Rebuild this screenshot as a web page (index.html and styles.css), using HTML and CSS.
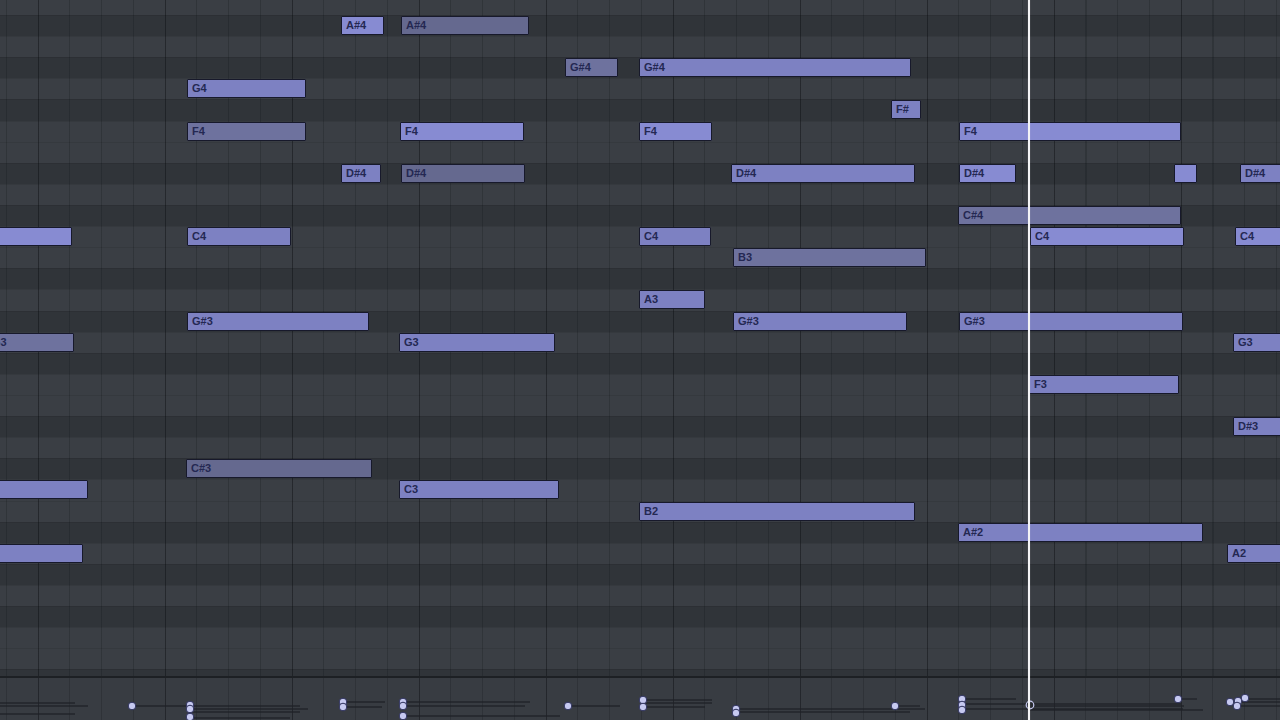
FILE: index.html
```html
<!DOCTYPE html>
<html>
<head>
<meta charset="utf-8">
<title>Piano Roll</title>
<link rel="stylesheet" href="styles.css">
</head>
<body>
<div class="roll">
  <div class="rows">
    <div class="track">
      <div class="row white"></div><!-- B4 -->
      <div class="row black"><!-- A#4 -->
        <div class="note v1" style="left:341px;width:43px">A#4</div>
        <div class="note v4" style="left:401px;width:128px">A#4</div>
      </div>
      <div class="row white"></div><!-- A4 -->
      <div class="row black"><!-- G#4 -->
        <div class="note v3" style="left:565px;width:53px">G#4</div>
        <div class="note v2" style="left:639px;width:272px">G#4</div>
      </div>
      <div class="row white"><!-- G4 -->
        <div class="note v2" style="left:187px;width:119px">G4</div>
      </div>
      <div class="row black"><!-- F#4 -->
        <div class="note v2" style="left:891px;width:30px">F#</div>
      </div>
      <div class="row white"><!-- F4 -->
        <div class="note v3" style="left:187px;width:119px">F4</div>
        <div class="note v1" style="left:400px;width:124px">F4</div>
        <div class="note v1" style="left:639px;width:73px">F4</div>
        <div class="note v1" style="left:959px;width:222px">F4</div>
      </div>
      <div class="row white"></div><!-- E4 -->
      <div class="row black"><!-- D#4 -->
        <div class="note v2" style="left:341px;width:40px">D#4</div>
        <div class="note v4" style="left:401px;width:124px">D#4</div>
        <div class="note v2" style="left:731px;width:184px">D#4</div>
        <div class="note v1" style="left:959px;width:57px">D#4</div>
        <div class="note v1" style="left:1174px;width:23px"></div>
        <div class="note v2" style="left:1240px;width:60px">D#4</div>
      </div>
      <div class="row white"></div><!-- D4 -->
      <div class="row black"><!-- C#4 -->
        <div class="note v3" style="left:958px;width:223px">C#4</div>
      </div>
      <div class="row white"><!-- C4 -->
        <div class="note v1" style="left:-10px;width:82px"></div>
        <div class="note v2" style="left:187px;width:104px">C4</div>
        <div class="note v2" style="left:639px;width:72px">C4</div>
        <div class="note v1" style="left:1030px;width:154px">C4</div>
        <div class="note v1" style="left:1235px;width:60px">C4</div>
      </div>
      <div class="row white"><!-- B3 -->
        <div class="note v3" style="left:733px;width:193px">B3</div>
      </div>
      <div class="row black"></div><!-- A#3 -->
      <div class="row white"><!-- A3 -->
        <div class="note v2" style="left:639px;width:66px">A3</div>
      </div>
      <div class="row black"><!-- G#3 -->
        <div class="note v2" style="left:187px;width:182px">G#3</div>
        <div class="note v2" style="left:733px;width:174px">G#3</div>
        <div class="note v2" style="left:959px;width:224px">G#3</div>
      </div>
      <div class="row white"><!-- G3 -->
        <div class="note v3" style="left:-13px;width:87px">G3</div>
        <div class="note v2" style="left:399px;width:156px">G3</div>
        <div class="note v2" style="left:1233px;width:60px">G3</div>
      </div>
      <div class="row black"></div><!-- F#3 -->
      <div class="row white"><!-- F3 -->
        <div class="note v2" style="left:1029px;width:150px">F3</div>
      </div>
      <div class="row white"></div><!-- E3 -->
      <div class="row black"><!-- D#3 -->
        <div class="note v2" style="left:1233px;width:60px">D#3</div>
      </div>
      <div class="row white"></div><!-- D3 -->
      <div class="row black"><!-- C#3 -->
        <div class="note v4" style="left:186px;width:186px">C#3</div>
      </div>
      <div class="row white"><!-- C3 -->
        <div class="note v2" style="left:-10px;width:98px"></div>
        <div class="note v2" style="left:399px;width:160px">C3</div>
      </div>
      <div class="row white"><!-- B2 -->
        <div class="note v2" style="left:639px;width:276px">B2</div>
      </div>
      <div class="row black"><!-- A#2 -->
        <div class="note v2" style="left:958px;width:245px">A#2</div>
      </div>
      <div class="row white"><!-- A2 -->
        <div class="note v2" style="left:-10px;width:93px"></div>
        <div class="note v2" style="left:1227px;width:70px">A2</div>
      </div>
      <div class="row black"></div><!-- G#2 -->
      <div class="row white"></div><!-- G2 -->
      <div class="row black"></div><!-- F#2 -->
      <div class="row white"></div><!-- F2 -->
      <div class="row white"></div><!-- E2 -->
      <div class="row black"></div><!-- D#2 -->
      <div class="row white"></div><!-- D2 -->
    </div>
  </div>
  <div class="velocity">
    <svg class="vel-svg" width="1280" height="42" viewBox="0 678 1280 42">
      <g class="stems">
        <line x1="0" y1="703" x2="75" y2="703"/>
        <line x1="0" y1="706" x2="88" y2="706"/>
        <line x1="0" y1="714" x2="75" y2="714"/>
        <line x1="132" y1="706" x2="300" y2="706"/>
        <line x1="190" y1="709" x2="308" y2="709"/>
        <line x1="190" y1="712" x2="300" y2="712"/>
        <line x1="190" y1="718" x2="290" y2="718"/>
        <line x1="343" y1="702" x2="385" y2="702"/>
        <line x1="343" y1="707" x2="382" y2="707"/>
        <line x1="403" y1="702" x2="530" y2="702"/>
        <line x1="403" y1="706" x2="525" y2="706"/>
        <line x1="403" y1="716" x2="560" y2="716"/>
        <line x1="568" y1="706" x2="620" y2="706"/>
        <line x1="643" y1="700" x2="712" y2="700"/>
        <line x1="643" y1="703" x2="712" y2="703"/>
        <line x1="643" y1="707" x2="705" y2="707"/>
        <line x1="736" y1="709" x2="925" y2="709"/>
        <line x1="736" y1="712" x2="910" y2="712"/>
        <line x1="895" y1="706" x2="920" y2="706"/>
        <line x1="962" y1="699" x2="1016" y2="699"/>
        <line x1="962" y1="704" x2="1181" y2="704"/>
        <line x1="962" y1="709" x2="1183" y2="709"/>
        <line x1="1030" y1="706" x2="1184" y2="706"/>
        <line x1="1030" y1="710" x2="1203" y2="710"/>
        <line x1="1178" y1="699" x2="1197" y2="699"/>
        <line x1="1238" y1="699" x2="1280" y2="699"/>
        <line x1="1238" y1="702" x2="1280" y2="702"/>
        <line x1="1238" y1="706" x2="1280" y2="706"/>
      </g>
      <g class="dots">
        <circle cx="132" cy="706" r="3.8"/>
        <circle cx="190" cy="705" r="3.8"/>
        <circle cx="190" cy="709" r="3.8"/>
        <circle cx="190" cy="717" r="3.8"/>
        <circle cx="343" cy="702" r="3.8"/>
        <circle cx="343" cy="707" r="3.8"/>
        <circle cx="403" cy="702" r="3.8"/>
        <circle cx="403" cy="706" r="3.8"/>
        <circle cx="403" cy="716" r="3.8"/>
        <circle cx="568" cy="706" r="3.8"/>
        <circle cx="643" cy="700" r="3.8"/>
        <circle cx="643" cy="707" r="3.8"/>
        <circle cx="736" cy="709" r="3.8"/>
        <circle cx="736" cy="713" r="3.8"/>
        <circle cx="895" cy="706" r="3.8"/>
        <circle cx="962" cy="699" r="3.8"/>
        <circle cx="962" cy="705" r="3.8"/>
        <circle cx="962" cy="710" r="3.8"/>
        <circle cx="1178" cy="699" r="3.8"/>
        <circle cx="1230" cy="702" r="3.8"/>
        <circle cx="1238" cy="701" r="3.8"/>
        <circle cx="1245" cy="698" r="3.8"/>
        <circle cx="1237" cy="706" r="3.8"/>
      </g>
      <circle class="ring" cx="1030" cy="705" r="3.8"/>
    </svg>
  </div>
  <div class="playhead"></div>
</div>
</body>
</html>
```

FILE: styles.css
```css
html, body {
  margin: 0;
  padding: 0;
  background: #383c42;
  overflow: hidden;
}

.roll {
  position: relative;
  width: 1280px;
  height: 720px;
  overflow: hidden;
  display: flex;
  flex-direction: column;
  font-family: "Liberation Sans", Arial, sans-serif;
  --beat: rgba(10, 12, 16, 0.2);
  --bar: rgba(10, 12, 16, 0.3);
}

.rows {
  flex: none;
  height: 676px;
  overflow: hidden;
}

.track {
  display: flex;
  flex-direction: column;
  margin-top: -6.12px;
}

.row {
  position: relative;
  flex: none;
  height: 21.12px;
  box-sizing: border-box;
  border-top: 1px solid rgba(0, 0, 0, 0.08);
  background-image:
    repeating-linear-gradient(90deg, var(--bar) 38px 39px, transparent 39px 165px),
    repeating-linear-gradient(90deg, var(--beat) 6px 7px, transparent 7px 37.75px);
}

.row.white {
  background-color: #3a3e44;
}

.row.black {
  background-color: #303439;
}

.note {
  position: absolute;
  top: 0;
  height: 19px;
  box-sizing: border-box;
  border: 1.5px solid #17192b;
  border-radius: 1px;
  padding-left: 4px;
  font-size: 11px;
  font-weight: bold;
  line-height: 16px;
  color: #242852;
  white-space: nowrap;
  overflow: hidden;
  z-index: 1;
}

.note.v1 { background: #878bd2; }
.note.v2 { background: #7d81c2; }
.note.v3 { background: #6e729e; }
.note.v4 { background: #65698f; }

.velocity {
  flex: 1;
  border-top: 2px solid #1d2024;
  background-color: #383c42;
  background-image:
    repeating-linear-gradient(90deg, var(--bar) 38px 39px, transparent 39px 165px),
    repeating-linear-gradient(90deg, var(--beat) 6px 7px, transparent 7px 37.75px);
}

.vel-svg {
  display: block;
}

.stems line {
  stroke: #1f2227;
  stroke-width: 1.4;
  opacity: 0.85;
}

.dots circle {
  fill: #c6c9f0;
  stroke: #2c2f5a;
  stroke-width: 1;
}

.ring {
  fill: none;
  stroke: #c6c9f0;
  stroke-width: 1.2;
}

.playhead {
  position: absolute;
  left: 1028px;
  top: 0;
  width: 2px;
  height: 720px;
  background: #f4f4f6;
  box-shadow: 0 0 1px rgba(255, 255, 255, 0.5);
  z-index: 5;
}
```
